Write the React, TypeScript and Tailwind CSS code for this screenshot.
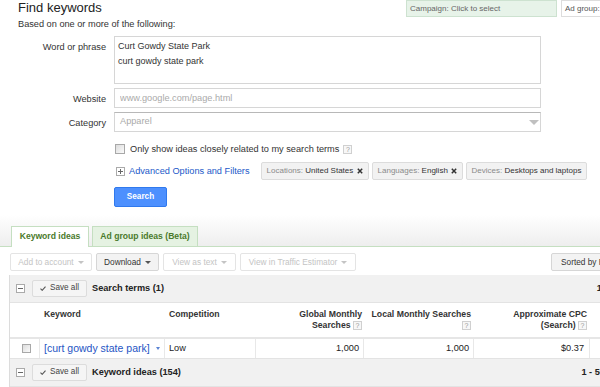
import React from "react";

function Help() {
  return (
    <span className="inline-flex h-[9px] w-[9px] shrink-0 items-center justify-center border border-[#d0d0d0] bg-[#f7f7f7] align-middle text-[7px] font-normal leading-none text-[#999]">
      ?
    </span>
  );
}

function ToggleBox({ plus }: { plus?: boolean }) {
  return (
    <svg width="9" height="9" viewBox="0 0 9 9" className="shrink-0">
      <rect x="0.5" y="0.5" width="8" height="8" fill="#fff" stroke="#aaa" />
      <path d="M2 4.5h5" stroke="#666" />
      {plus && <path d="M4.5 2v5" stroke="#666" />}
    </svg>
  );
}

function Check() {
  return (
    <svg width="6" height="5" viewBox="0 0 6 5" className="shrink-0">
      <path d="M0.5 2.6 L2.2 4.3 L5.5 0.6" stroke="#555" strokeWidth="1.1" fill="none" />
    </svg>
  );
}

function Cross() {
  return (
    <svg width="6" height="6" viewBox="0 0 6 6" className="shrink-0">
      <path d="M0.8 0.8L5.2 5.2M5.2 0.8L0.8 5.2" stroke="#333" strokeWidth="1.5" />
    </svg>
  );
}

function Checkbox({ size }: { size: string }) {
  return <span className={`${size} inline-block shrink-0 border border-[#a8a8a8] bg-linear-to-br from-[#dcdcdc] to-[#fbfbfb]`} />;
}

function SaveAll() {
  return (
    <button className="flex h-[17px] w-[55px] shrink-0 items-center justify-center gap-[4px] rounded-[2px] border border-[#dcdcdc] bg-[#f5f5f5] text-[8.2px] text-[#444]">
      <Check />
      Save all
    </button>
  );
}

function Chip({ label, value, w, close }: { label: string; value: string; w: string; close?: boolean }) {
  return (
    <div className={`${w} flex h-[18px] shrink-0 items-center justify-between rounded-[2px] border border-[#dcdcdc] bg-[#f2f2f2] px-[5px] text-[8px] whitespace-nowrap`}>
      <span>
        <span className="text-[#8a8a8a]">{label} </span>
        <span className="text-[#333]">{value}</span>
      </span>
      {close && <Cross />}
    </div>
  );
}

function ToolButton({ label, w, active }: { label: string; w: string; active?: boolean }) {
  return (
    <button
      className={`${w} flex h-[18px] shrink-0 items-center justify-center gap-[4px] rounded-[2px] border text-[8.3px] whitespace-nowrap ${
        active ? "border-[#d6d6d6] bg-[#f3f3f3] text-[#333]" : "border-[#e4e4e4] bg-white text-[#c4c4c4]"
      }`}
    >
      {label}
      <span
        className={`inline-block h-0 w-0 border-x-[3px] border-t-[3px] border-x-transparent ${
          active ? "border-t-[#555]" : "border-t-[#c4c4c4]"
        }`}
      />
    </button>
  );
}

function GroupRow({ title, range }: { title: string; range: string }) {
  return (
    <div className="flex h-[28px] items-center border-b border-[#e3e3e3] bg-[#f1f1f1] pl-[6px] pr-[7px]">
      <ToggleBox />
      <div className="ml-[7px]">
        <SaveAll />
      </div>
      <span className="ml-[5px] text-[9.2px] font-bold text-[#222]">{title}</span>
      <span className="ml-auto text-[9.2px] font-bold text-[#222]">{range}</span>
    </div>
  );
}

export default function App() {
  return (
    <div className="h-[387px] w-[600px] overflow-hidden bg-white font-['Liberation_Sans',Arial,sans-serif] text-[#222]">
      <div className="pl-[18px]">
        <div className="flex h-[17px] items-start">
          <h1 className="w-[388px] shrink-0 text-[13px] font-normal leading-[15px] text-[#222]">Find keywords</h1>
          <div className="flex shrink-0 gap-[4px]">
            <div className="h-[17px] w-[151px] border border-[#cde2d0] bg-[#e7f3e9] pl-[3px] text-[8px] leading-[15px] text-[#666]">
              Campaign: Click to select
            </div>
            <div className="h-[17px] w-[80px] overflow-hidden whitespace-nowrap border border-[#ddd] bg-white pl-[3px] text-[8px] leading-[15px] text-[#555]">
              Ad group: Click to select
            </div>
          </div>
        </div>
        <p className="mt-[2px] text-[9.2px] leading-[11px] text-[#333]">Based on one or more of the following:</p>

        <div className="mt-[6px] grid grid-cols-[88px_427px] gap-x-[8px] gap-y-[4px]">
          <label className="pt-[6px] text-right text-[9.2px] leading-[11px] text-[#333]">Word or phrase</label>
          <textarea
            className="block h-[48px] w-full resize-none overflow-hidden border border-[#d6d6d6] px-[3px] pt-[2px] text-[9px] leading-[14.5px] text-[#333] outline-none"
            defaultValue={"Curt Gowdy State Park\ncurt gowdy state park"}
          />

          <label className="pt-[6px] text-right text-[9.2px] leading-[11px] text-[#333]">Website</label>
          <input
            className="block h-[20px] w-full border border-[#d6d6d6] pl-[5px] text-[9.2px] text-[#333] outline-none placeholder:text-[#aaa]"
            placeholder="www.google.com/page.html"
          />

          <label className="pt-[6px] text-right text-[9.2px] leading-[11px] text-[#333]">Category</label>
          <div className="flex h-[20px] items-center justify-between border border-[#d6d6d6] border-t-[#b8b8b8] pl-[5px] pr-[1px] text-[9.2px] text-[#aaa]">
            <span>Apparel</span>
            <span className="inline-block h-0 w-0 border-x-[5px] border-t-[5px] border-x-transparent border-t-[#c0c0c0]" />
          </div>
        </div>

        <div className="pl-[96px]">
          <div className="mt-[11px] flex h-[12px] items-center">
            <span className="ml-[1px]">
              <Checkbox size="h-[10px] w-[10px]" />
            </span>
            <span className="ml-[5px] text-[9.2px] leading-[11px] text-[#333]">Only show ideas closely related to my search terms</span>
            <span className="ml-[4px]">
              <Help />
            </span>
          </div>

          <div className="mt-[7px] flex h-[18px] items-center">
            <span className="ml-[2px] flex">
              <ToggleBox plus />
            </span>
            <a className="ml-[4px] text-[9.2px] leading-[11px] text-[#2159c9]">Advanced Options and Filters</a>
            <div className="ml-[11px] flex gap-[3px]">
              <Chip label="Locations:" value="United States" w="w-[108px]" close />
              <Chip label="Languages:" value="English" w="w-[91px]" close />
              <Chip label="Devices:" value="Desktops and laptops" w="w-[121px]" />
            </div>
          </div>

          <button className="mt-[7px] flex h-[20px] w-[53px] items-center justify-center rounded-[2px] border border-[#3079ed] bg-[#4d90fe] text-[8.2px] font-bold text-white">
            Search
          </button>
        </div>
      </div>

      <div className="flex h-[40px] items-end gap-[3px] border-b border-[#c5dfc1] bg-linear-to-b from-white from-[20%] to-[#eeeeee] pl-[11px]">
        <div className="relative -mb-px flex h-[21px] w-[78px] items-center justify-center border border-b-0 border-[#c5dfc1] bg-white pb-px text-[8.6px] font-bold text-[#4a7a2c]">
          Keyword ideas
        </div>
        <div className="flex h-[20px] w-[106px] items-center justify-center border border-b-0 border-[#c5dfc1] bg-[#e5f2e2] text-[8.6px] font-bold text-[#4a7a2c]">
          Ad group ideas (Beta)
        </div>
      </div>

      <div className="mt-[6px] flex h-[18px] gap-[4px] pl-[10px]">
        <ToolButton label="Add to account" w="w-[82px]" />
        <ToolButton label="Download" w="w-[63px]" active />
        <ToolButton label="View as text" w="w-[73px]" />
        <ToolButton label="View in Traffic Estimator" w="w-[116px]" />
        <button className="-mr-[30px] ml-auto flex h-[18px] w-[79px] shrink-0 items-center whitespace-nowrap rounded-[2px] border border-[#d6d6d6] bg-[#f3f3f3] pl-[9px] text-[8.3px] text-[#333]">
          Sorted by Relevance
        </button>
      </div>

      <div className="ml-[9px] mt-[4px] w-[632px] border-l border-[#dcdcdc]">
        <GroupRow title="Search terms (1)" range="1 - 1 of 1" />

        <div className="grid h-[36px] grid-cols-[30px_125px_91px_108px_110px_116px_1fr] border-b-2 border-[#e6e6e6] pt-[6px] text-[8.7px] font-bold leading-[11px] text-[#333]">
          <div />
          <div className="pl-[4px]">Keyword</div>
          <div className="pl-[4px]">Competition</div>
          <div className="pr-[2px] text-right">
            Global Monthly
            <br />
            Searches <Help />
          </div>
          <div className="whitespace-nowrap pr-[3px] text-right">
            Local Monthly Searches
            <br />
            <Help />
          </div>
          <div className="pr-[3px] text-right">
            Approximate CPC
            <br />
            (Search) <Help />
          </div>
          <div />
        </div>

        <div className="grid h-[20px] grid-cols-[30px_125px_91px_108px_110px_116px_1fr] border-b border-[#e3e3e3] text-[9.2px] text-[#222]">
          <div className="flex items-center border-r border-[#e8e8e8] pl-[12px]">
            <Checkbox size="h-[9px] w-[9px]" />
          </div>
          <div className="flex items-center border-r border-[#e8e8e8] pl-[4px]">
            <a className="text-[10.5px] text-[#1f55c4]">[curt gowdy state park]</a>
            <span className="ml-[6px] inline-block h-0 w-0 border-x-[2.5px] border-t-[3px] border-x-transparent border-t-[#5b84d4]" />
          </div>
          <div className="flex items-center border-r border-[#e8e8e8] pl-[4px]">Low</div>
          <div className="flex items-center justify-end border-r border-[#e8e8e8] pr-[4px]">1,000</div>
          <div className="flex items-center justify-end border-r border-[#e8e8e8] pr-[4px]">1,000</div>
          <div className="flex items-center justify-end border-r border-[#e8e8e8] pr-[5px]">$0.37</div>
          <div />
        </div>

        <GroupRow title="Keyword ideas (154)" range="1 - 50 of 154" />
      </div>
    </div>
  );
}
